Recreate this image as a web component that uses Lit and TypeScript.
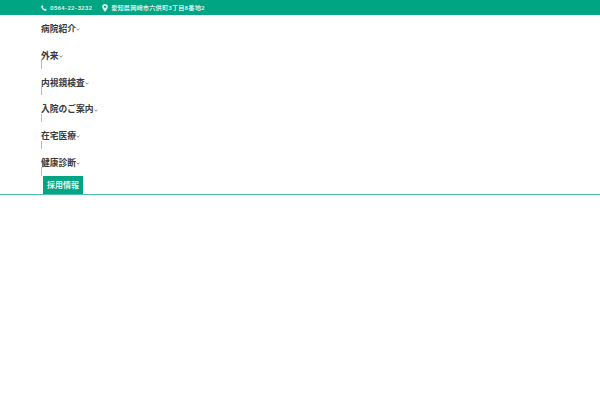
import { LitElement, html, css } from "lit";
import { customElement } from "lit/decorators.js";

const ITEMS = ["病院紹介", "外来", "内視鏡検査", "入院のご案内", "在宅医療", "健康診断"];

@customElement("app-root")
export class AppRoot extends LitElement {
  static styles = css`
    :host { display: block; background: #fff; height: 400px; font-family: Roboto, "Noto Sans CJK JP", sans-serif; }
    .top { height: 15px; background: #00a584; color: #d5efe8; display: flex; align-items: center; padding-left: 41px; gap: 10px; font-size: 6.2px; font-weight: 700; box-sizing: border-box; }
    .info { display: flex; align-items: center; gap: 3px; letter-spacing: .15px; }
    .info svg { display: block; fill: #d5efe8; }
    .nav { border-bottom: 1px solid #4dbfa8; height: 180px; box-sizing: border-box; padding-left: 41px; display: flex; flex-direction: column; }
    .item { height: 26.8px; display: flex; flex-direction: column; }
    .row { height: 14.5px; padding-top: 7px; display: flex; align-items: center; color: #3a3a3a; font-size: 8.75px; font-weight: 700; line-height: 14.5px; }
    .row svg { display: block; margin-left: 0; margin-top: 1px; }
    .tick { width: 1px; height: 9px; margin-top: -3px; background: #bbb; }
    .first .tick { visibility: hidden; }
    .btn { align-self: flex-start; margin: 0 0 0 2px; width: 40px; height: 18px; background: #00a584; color: #e4f5f0; font-size: 8px; font-weight: 700; display: flex; align-items: center; justify-content: center; }
  `;

  render() {
    return html`
      <div class="top">
        <div class="info">
          <svg width="6" height="6" viewBox="0 0 10 10"><path d="M2.6 .4 4.2 3 3.2 4.2C3.8 5.3 4.7 6.2 5.8 6.8L7 5.800 9.6 7.4 8.8 9.3C8.6 9.7 8.2 9.9 7.7 9.8 4 9.2 .8 6 .2 2.3.1 1.8.3 1.4.7 1.2Z"/></svg>
          <span>0564-22-3232</span>
        </div>
        <div class="info">
          <svg width="6" height="8" viewBox="0 0 10 14"><path fill-rule="evenodd" d="M5 0a5 5 0 0 1 5 5c0 3-3 6.500-5 9C3 11.500 0 8 0 5a5 5 0 0 1 5-5Zm0 3a2 2 0 1 0 0 4 2 2 0 0 0 0-4Z"/></svg>
          <span>愛知県岡崎市六供町3丁目8番地2</span>
        </div>
      </div>
      <div class="nav">
        ${ITEMS.map((t, i) => html`
          <div class="item ${i === 0 ? "first" : ""}">
            <div class="row">${t}<svg width="4" height="3" viewBox="0 0 4 3"><path d="M.5 .8 2 2.200 3.500 .8" fill="none" stroke="#555" stroke-width=".7"/></svg></div>
            <div class="tick"></div>
          </div>`)}
        <div class="btn">採用情報</div>
      </div>
    `;
  }
}
